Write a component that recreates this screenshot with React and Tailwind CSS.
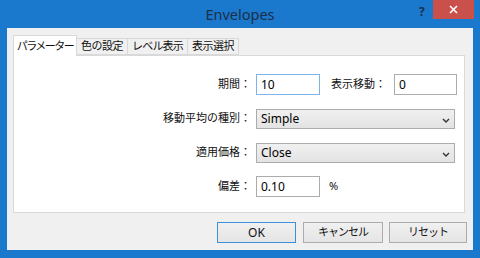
import React from 'react';

const font = { fontFamily: '"Segoe UI", "Noto Sans", "Noto Sans CJK JP", sans-serif' };

const Chevron = () => (
  <svg width="8" height="5" viewBox="0 0 8 5" className="absolute right-[4px] top-[8px]">
    <path d="M1 1 L4 4 L7 1" fill="none" stroke="#333" strokeWidth="1.4" />
  </svg>
);

const Row = ({ label, children }) => (
  <div className="flex items-center h-[21px]">
    <div className="w-[239px] text-right pr-[2px] text-[11px] text-[#111] whitespace-nowrap">{label}</div>
    <div className="ml-[3px] flex items-center">{children}</div>
  </div>
);

const Select = ({ value }) => (
  <div className="relative w-[199px] h-[20px] border border-[#acacac] bg-[linear-gradient(#f0f0f0,#e3e3e3)] pl-[4px] text-[12px] leading-[18px] text-black">
    {value}
    <Chevron />
  </div>
);

export default function App() {
  const tabs = [
    { name: 'パラメーター', w: 'w-[64px]', tr: 'tracking-[-1.5px]', active: true },
    { name: '色の設定', w: 'w-[51px]', tr: 'tracking-[-0.5px]' },
    { name: 'レベル表示', w: 'w-[60px]', tr: 'tracking-[-0.8px]' },
    { name: '表示選択', w: 'w-[51px]', tr: 'tracking-[-0.5px]' },
  ];

  return (
    <div className="w-[480px] h-[258px] bg-[#1a79cc] flex flex-col overflow-hidden" style={font}>
      {/* title bar */}
      <div className="relative h-[28px] shrink-0 flex items-center justify-center">
        <span className="text-[14.5px] text-[#1d2f4a] mt-[1px]">Envelopes</span>
        <span className="absolute left-[419px] top-[3px] text-[12px] font-bold text-[#1d2f4a]">?</span>
        <div className="absolute left-[433px] top-0 w-[41px] h-[19px] bg-[#c9504b] flex items-center justify-center">
          <svg width="9" height="9" viewBox="0 0 9 9">
            <path d="M1 1 L8 8 M8 1 L1 8" stroke="#fff" strokeWidth="1.6" />
          </svg>
        </div>
      </div>

      {/* client area */}
      <div className="mx-[7px] mb-[8px] flex-1 bg-[#f0f0f0] flex flex-col pt-[7px] pl-[6px] pr-[8px]">
        {/* tabs */}
        <div className="flex items-end h-[21px] relative z-10 text-[11px] text-[#111] whitespace-nowrap">
          {tabs.map(t =>
            t.active ? (
              <div key={t.name} className={`${t.w} ${t.tr} h-[21px] bg-white border border-b-0 border-[#d9d9d9] flex items-center justify-center`}>
                {t.name}
              </div>
            ) : (
              <div key={t.name} className={`${t.w} ${t.tr} h-[17px] mb-[1px] bg-[#f0f0f0] border border-l-0 border-[#d9d9d9] flex items-center justify-center`}>
                {t.name}
              </div>
            )
          )}
        </div>

        {/* panel */}
        <div className="-mt-[1px] h-[158px] bg-white border border-[#d9d9d9] pt-[18px] flex flex-col gap-[13px]">
          <Row label="期間：">
            <div className="w-[64px] h-[21px] border border-[#7eb4ea] pl-[4px] text-[12px] leading-[19px] text-black">10</div>
            <span className="ml-[11px] text-[11px] text-[#111] whitespace-nowrap">表示移動：</span>
            <div className="ml-[8px] w-[63px] h-[21px] border border-[#acacac] pl-[4px] text-[12px] leading-[19px] text-black">0</div>
          </Row>
          <Row label="移動平均の種別：">
            <Select value="Simple" />
          </Row>
          <Row label="適用価格：">
            <Select value="Close" />
          </Row>
          <Row label="偏差：">
            <div className="w-[64px] h-[21px] border border-[#acacac] pl-[4px] text-[12px] leading-[19px] text-black">0.10</div>
            <span className="ml-[9px] text-[11px] text-[#111]">%</span>
          </Row>
        </div>

        {/* buttons */}
        <div className="flex justify-end mt-[9px] mr-[-2px] text-[11px] text-[#111] whitespace-nowrap">
          <div className="w-[79px] h-[21px] border border-[#3c8fd9] bg-[linear-gradient(#f0f0f0,#e5e5e5)] flex items-center justify-center text-[12px]">OK</div>
          <div className="ml-[7px] w-[80px] h-[21px] border border-[#acacac] bg-[linear-gradient(#f0f0f0,#e5e5e5)] flex items-center justify-center tracking-[-1px]">キャンセル</div>
          <div className="ml-[6px] w-[78px] h-[21px] border border-[#acacac] bg-[linear-gradient(#f0f0f0,#e5e5e5)] flex items-center justify-center tracking-[-1px]">リセット</div>
        </div>
      </div>
    </div>
  );
}
